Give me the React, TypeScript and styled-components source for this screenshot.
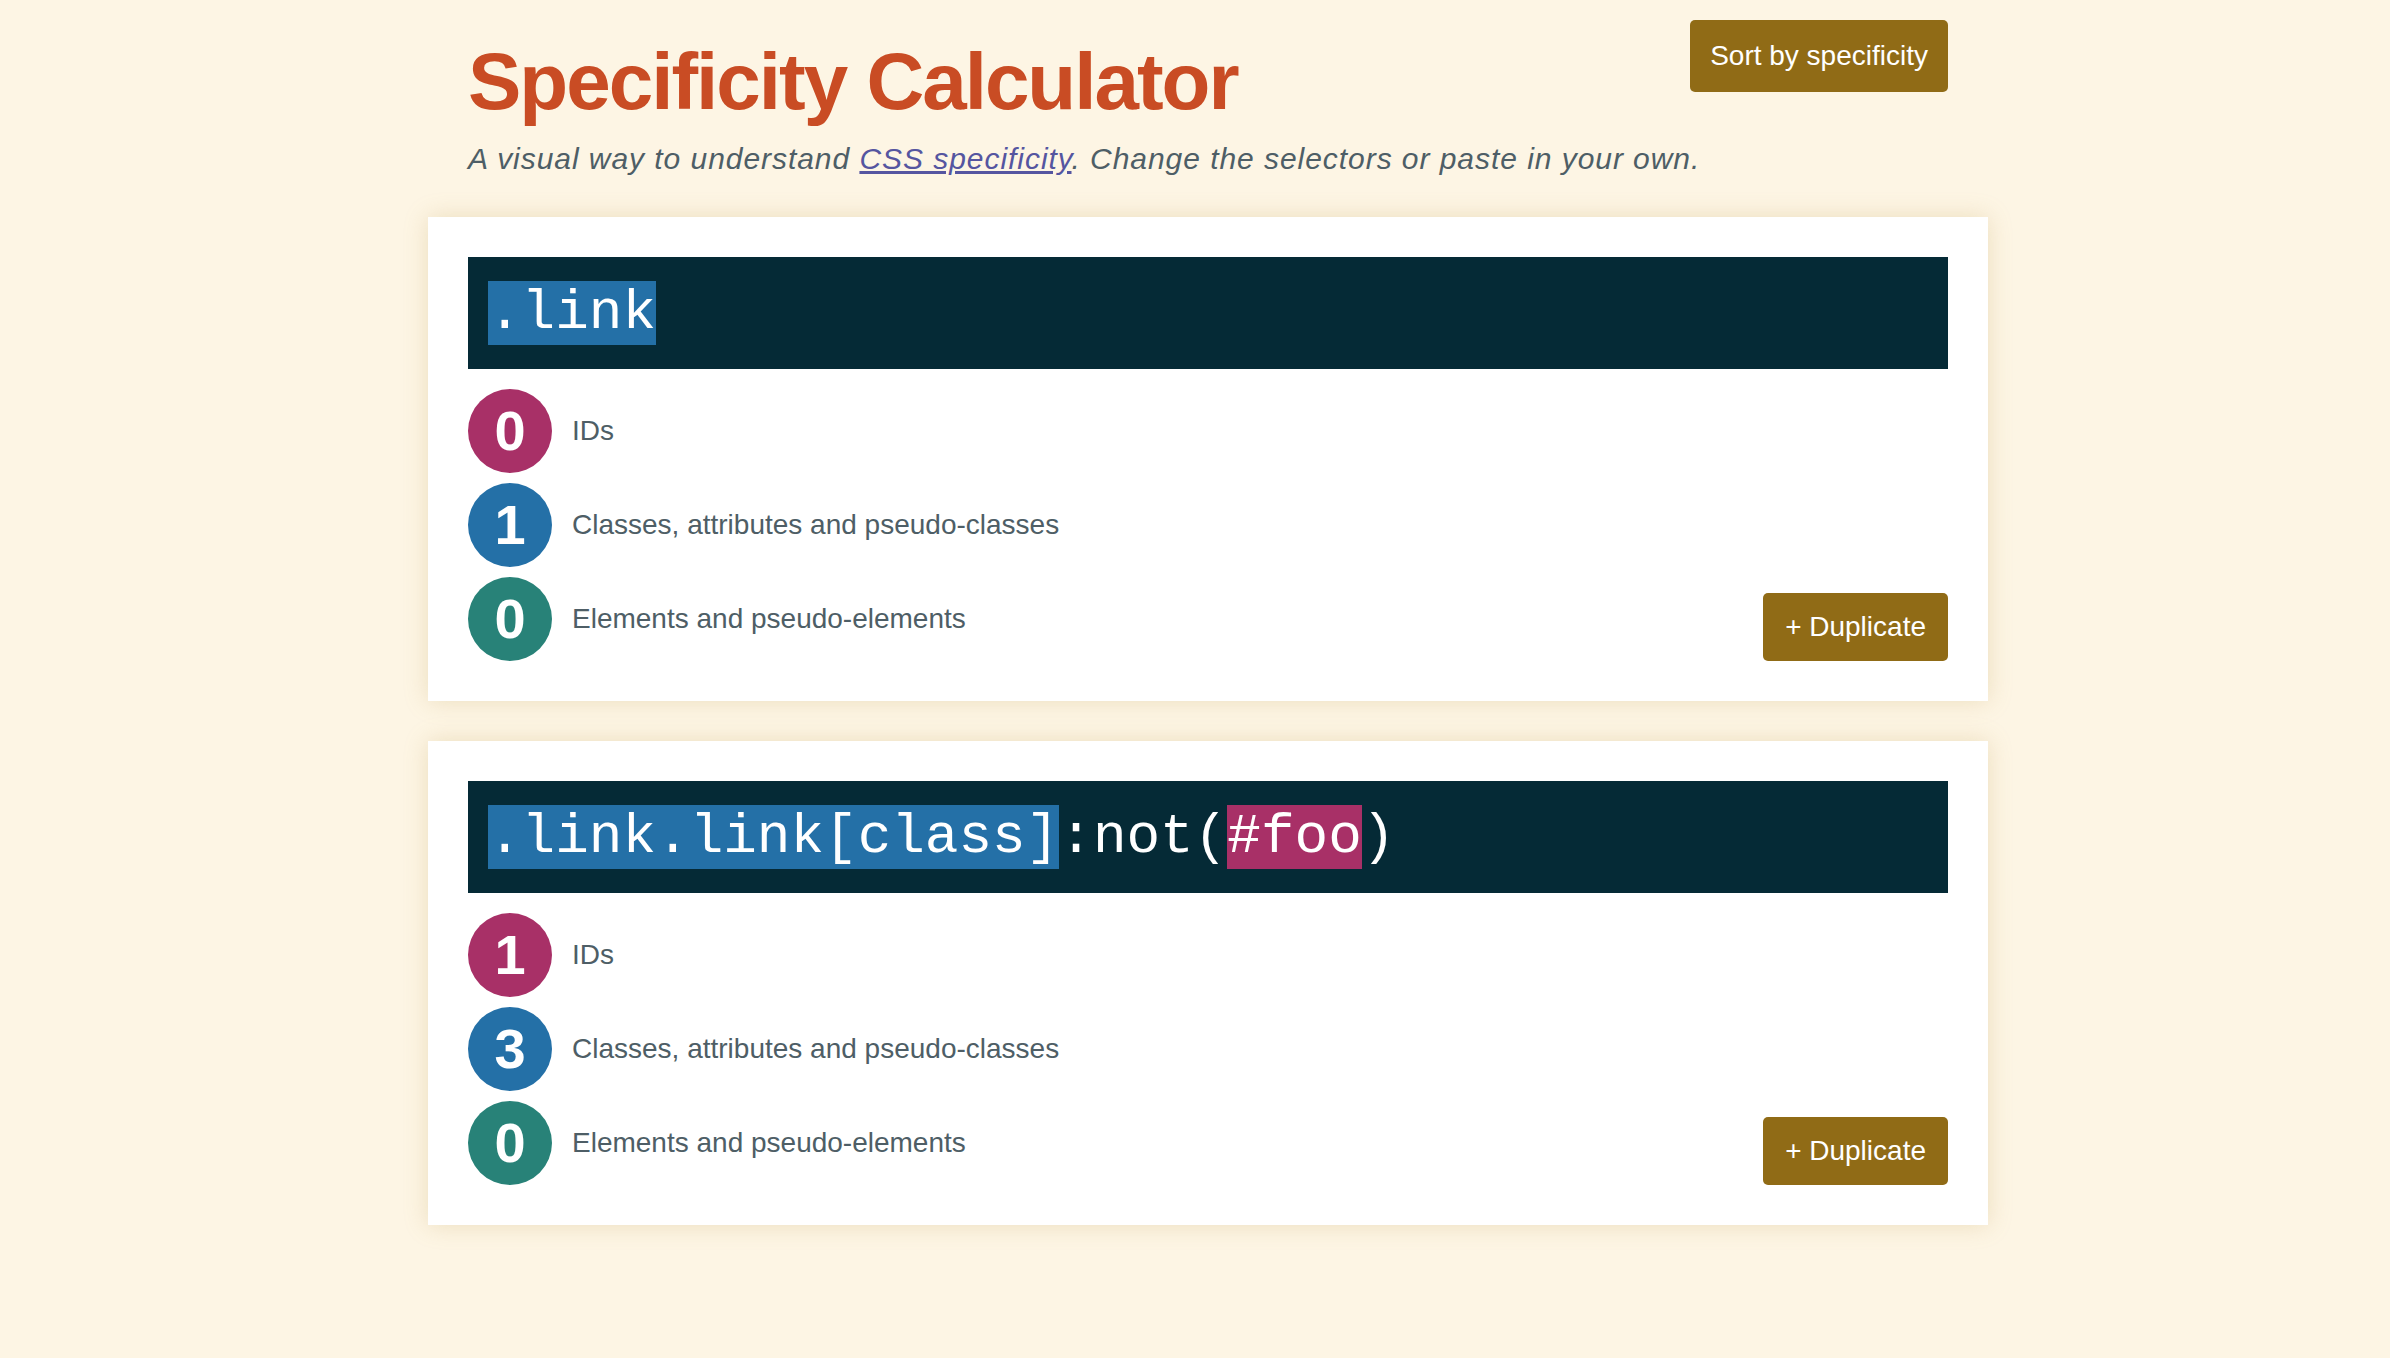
import React from "react";
import styled, { createGlobalStyle } from "styled-components";

const GlobalStyle = createGlobalStyle`
  html, body {
    margin: 0;
    padding: 0;
    background: #fdf5e4;
  }
  body {
    font-family: "Liberation Sans", Helvetica, Arial, sans-serif;
    color: #4e5e66;
  }
`;

const Page = styled.main`
  width: 1560px;
  margin-left: 428px;
  padding-bottom: 80px;
`;

const Header = styled.header`
  display: flex;
  justify-content: space-between;
  align-items: flex-start;
  padding: 0 40px;
  margin-bottom: 41px;
`;

const TitleBlock = styled.div`
  flex: 1;
  min-width: 0;
  padding-top: 42px;
`;

const Title = styled.h1`
  margin: 0;
  font-size: 80px;
  line-height: 80px;
  font-weight: 700;
  letter-spacing: -2px;
  color: #c94c24;
`;

const Subtitle = styled.p`
  margin: 20px 0 0;
  font-size: 30px;
  line-height: 34px;
  font-style: italic;
  letter-spacing: 0.95px;
  white-space: nowrap;
  color: #4e5e66;
`;

const Link = styled.a`
  color: #5555a0;
  text-decoration: underline;
`;

const Button = styled.button<{ $h: number; $px: number }>`
  flex: none;
  border: none;
  border-radius: 5px;
  background: #906b16;
  color: #fff;
  font-family: "Liberation Sans", Helvetica, Arial, sans-serif;
  font-size: 28px;
  padding: 0 ${(p) => p.$px}px;
  height: ${(p) => p.$h}px;
  cursor: pointer;
  white-space: nowrap;
`;

const SortButton = styled(Button)`
  margin-top: 20px;
`;

const Cards = styled.div`
  display: flex;
  flex-direction: column;
  gap: 40px;
`;

const Card = styled.section`
  background: #fff;
  padding: 40px;
  box-shadow: 0 0 22px rgba(190, 160, 90, 0.28);
`;

const SelectorBar = styled.div`
  background: #052a36;
  padding: 24px 20px;
  font-family: "Liberation Mono", "Courier New", monospace;
  font-size: 56px;
  line-height: 64px;
  color: #fff;
  white-space: pre;
`;

const Token = styled.span<{ $kind?: "id" | "class" }>`
  background: ${(p) =>
    p.$kind === "id" ? "#a83067" : p.$kind === "class" ? "#2470a7" : "transparent"};
`;

const Body = styled.div`
  display: flex;
  justify-content: space-between;
  align-items: flex-end;
  margin-top: 20px;
`;

const Rows = styled.div`
  display: flex;
  flex-direction: column;
  gap: 10px;
`;

const Row = styled.div`
  display: flex;
  align-items: center;
  gap: 20px;
`;

const Count = styled.div<{ $color: string }>`
  width: 84px;
  height: 84px;
  border-radius: 50%;
  background: ${(p) => p.$color};
  color: #fff;
  display: flex;
  align-items: center;
  justify-content: center;
  font-size: 56px;
  font-weight: 700;
  line-height: 1;
`;

const Label = styled.span`
  font-size: 28px;
  color: #4e5e66;
`;

type Part = { text: string; kind?: "id" | "class" };

type Selector = {
  parts: Part[];
  ids: number;
  classes: number;
  elements: number;
};

const selectors: Selector[] = [
  { parts: [{ text: ".link", kind: "class" }], ids: 0, classes: 1, elements: 0 },
  {
    parts: [
      { text: ".link.link[class]", kind: "class" },
      { text: ":not(" },
      { text: "#foo", kind: "id" },
      { text: ")" },
    ],
    ids: 1,
    classes: 3,
    elements: 0,
  },
];

const SelectorCard = ({ s }: { s: Selector }) => (
  <Card>
    <SelectorBar>
      {s.parts.map((p, i) => (
        <Token key={i} $kind={p.kind}>
          {p.text}
        </Token>
      ))}
    </SelectorBar>
    <Body>
      <Rows>
        <Row>
          <Count $color="#a83067">{s.ids}</Count>
          <Label>IDs</Label>
        </Row>
        <Row>
          <Count $color="#2470a7">{s.classes}</Count>
          <Label>Classes, attributes and pseudo-classes</Label>
        </Row>
        <Row>
          <Count $color="#288278">{s.elements}</Count>
          <Label>Elements and pseudo-elements</Label>
        </Row>
      </Rows>
      <Button $h={68} $px={22}>+ Duplicate</Button>
    </Body>
  </Card>
);

export default function App() {
  return (
    <>
      <GlobalStyle />
      <Page>
        <Header>
          <TitleBlock>
            <Title>Specificity Calculator</Title>
            <Subtitle>
              A visual way to understand <Link href="#">CSS specificity</Link>. Change the
              selectors or paste in your own.
            </Subtitle>
          </TitleBlock>
          <SortButton $h={72} $px={20}>Sort by specificity</SortButton>
        </Header>
        <Cards>
          {selectors.map((s, i) => (
            <SelectorCard key={i} s={s} />
          ))}
        </Cards>
      </Page>
    </>
  );
}
